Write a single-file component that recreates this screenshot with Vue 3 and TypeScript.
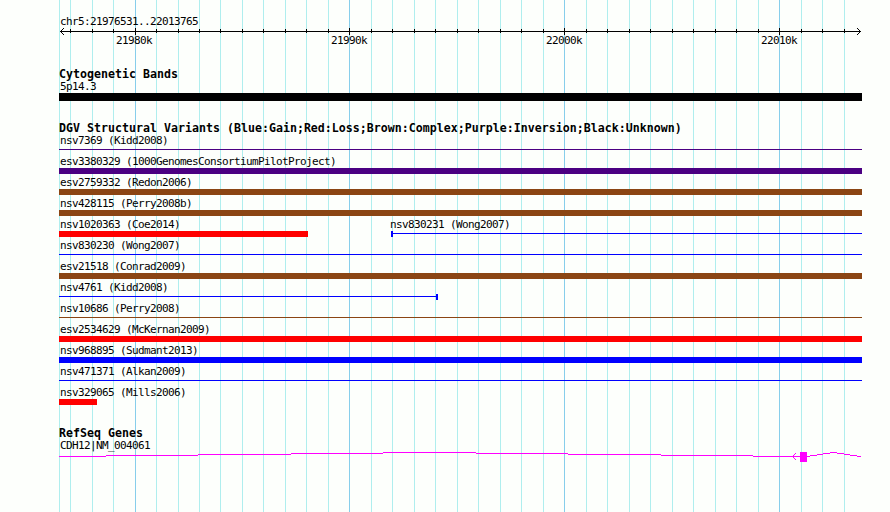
<script setup lang="ts">
interface Feature {
  label: string
  start: number
  end: number
  kind: 'bar' | 'line'
  color: 'gain' | 'loss' | 'complex' | 'inversion'
  cap?: 'left' | 'right'
}

const left = 59
const majors = [135, 349, 564, 779]
const grid = [
  59, 70, 92, 113, 135, 156, 178, 199, 220, 242, 263, 285, 306, 328, 349, 371, 392, 414, 435,
  457, 478, 500, 521, 543, 564, 586, 607, 629, 650, 672, 693, 715, 736, 758, 779, 801, 822, 844,
]
const ticks = grid.slice(1)
const isMajor = (x: number) => majors.includes(x)

const scaleLabels = ['21980k', '21990k', '22000k', '22010k']

const full = { start: 59, end: 862 }
const rows: Feature[][] = [
  [{ label: 'nsv7369 (Kidd2008)', ...full, kind: 'line', color: 'inversion' }],
  [{ label: 'esv3380329 (1000GenomesConsortiumPilotProject)', ...full, kind: 'bar', color: 'inversion' }],
  [{ label: 'esv2759332 (Redon2006)', ...full, kind: 'bar', color: 'complex' }],
  [{ label: 'nsv428115 (Perry2008b)', ...full, kind: 'bar', color: 'complex' }],
  [
    { label: 'nsv1020363 (Coe2014)', start: 59, end: 308, kind: 'bar', color: 'loss' },
    { label: 'nsv830231 (Wong2007)', start: 391, end: 862, kind: 'line', color: 'gain', cap: 'left' },
  ],
  [{ label: 'nsv830230 (Wong2007)', ...full, kind: 'line', color: 'gain' }],
  [{ label: 'esv21518 (Conrad2009)', ...full, kind: 'bar', color: 'complex' }],
  [{ label: 'nsv4761 (Kidd2008)', start: 59, end: 438, kind: 'line', color: 'gain', cap: 'right' }],
  [{ label: 'nsv10686 (Perry2008)', ...full, kind: 'line', color: 'complex' }],
  [{ label: 'esv2534629 (McKernan2009)', ...full, kind: 'bar', color: 'loss' }],
  [{ label: 'nsv968895 (Sudmant2013)', ...full, kind: 'bar', color: 'gain' }],
  [{ label: 'nsv471371 (Alkan2009)', ...full, kind: 'line', color: 'gain' }],
  [{ label: 'nsv329065 (Mills2006)', start: 59, end: 97, kind: 'bar', color: 'loss' }],
]

const place = (f: Feature, i: number, row: Feature[]) => ({
  width: `${f.end - f.start}px`,
  marginLeft: `${f.start - (i > 0 ? row[i - 1].end : left)}px`,
})

// Intron segments as [start, end, y]
const introns: [number, number, number][] = [
  [59, 106, 4], [106, 198, 3], [198, 291, 2], [291, 383, 1], [383, 476, 0], [476, 568, 1],
  [568, 661, 2], [661, 753, 3], [753, 810, 4], [810, 817, 3], [817, 823, 2], [823, 830, 1],
  [830, 837, 0], [837, 844, 1], [844, 850, 2], [850, 857, 3], [857, 861, 4],
]
</script>

<template>
  <main class="browser">
    <svg class="grid" width="890" height="512" shape-rendering="crispEdges">
      <rect v-for="x in grid" :key="x" :x="x" y="0" width="1" height="512" :class="{ major: isMajor(x) }" />
    </svg>

    <section class="scale">
      <div class="text range">chr5:21976531..22013765</div>
      <svg class="axis" width="803" height="8" viewBox="59 28 803 8" shape-rendering="crispEdges">
        <rect x="60" y="31" width="801" height="1" />
        <rect
          v-for="x in ticks"
          :key="x"
          :x="x"
          :y="isMajor(x) ? 28 : 29"
          width="1"
          :height="isMajor(x) ? 7 : 4"
        />
        <path d="M61 30h1v-1h1v-1h1v1h-1v1h-1v1h-1zM61 32h1v1h1v1h1v1h-1v-1h-1v-1h-1z" />
        <path d="M860 30h-1v-1h-1v-1h-1v1h1v1h1v1h1zM860 32h-1v1h-1v1h-1v1h1v-1h1v-1h1z" />
      </svg>
      <div class="positions">
        <span v-for="s in scaleLabels" :key="s" class="text">{{ s }}</span>
      </div>
    </section>

    <section class="track cyto">
      <h2>Cytogenetic Bands</h2>
      <div class="text">5p14.3</div>
      <div class="band"></div>
    </section>

    <section class="track variants">
      <h2>DGV Structural Variants (Blue:Gain;Red:Loss;Brown:Complex;Purple:Inversion;Black:Unknown)</h2>
      <div v-for="(row, r) in rows" :key="r" class="row">
        <div v-for="(f, i) in row" :key="f.label" class="feature" :style="place(f, i, row)">
          <div class="text" :class="{ flush: i > 0 }">{{ f.label }}</div>
          <div class="glyph" :class="[f.kind, f.color, f.cap]"></div>
        </div>
      </div>
    </section>

    <section class="track genes">
      <h2>RefSeq Genes</h2>
      <div class="text">CDH12|NM_004061</div>
      <svg class="gene" width="803" height="10" viewBox="59 0 803 10" shape-rendering="crispEdges">
        <rect v-for="s in introns" :key="s[0]" :x="s[0]" :y="s[2]" :width="s[1] - s[0]" height="1" />
        <rect x="800" y="0" width="7" height="10" />
        <path d="M793 3h1v3h-1zM794 2h1v1h-1zM795 1h1v1h-1zM794 6h1v1h-1zM795 7h1v1h-1z" />
      </svg>
    </section>
  </main>
</template>

<style>
body {
  margin: 0;
  background: #fdfffc;
}
</style>

<style scoped>
.browser {
  position: relative;
  box-sizing: border-box;
  width: 890px;
  height: 512px;
  padding: 15px 28px 0 59px;
  overflow: hidden;
  color: #000;
  font-family: 'DejaVu Sans Mono', 'Liberation Mono', monospace;
}
.grid {
  position: absolute;
  inset: 0;
  fill: #afeeee;
}
.grid .major {
  fill: #87ceeb;
}
section {
  position: relative;
}
svg {
  display: block;
}
.text {
  height: 12px;
  padding-left: 1px;
  font-size: 11px;
  line-height: 13px;
  letter-spacing: -0.622px;
  white-space: pre;
}
.text.flush {
  padding-left: 0;
  margin-left: -1px;
}
.scale {
  height: 53px;
}
.range {
  height: 13px;
}
.positions {
  display: flex;
  gap: 178px;
  padding: 0 0 0 56px;
  margin-top: -2px;
}
.positions .text {
  width: 36px;
}
h2 {
  height: 12px;
  margin: 0;
  font-size: 11.6px;
  font-weight: 700;
  line-height: 12px;
  letter-spacing: 0.0165px;
  white-space: pre;
}
.cyto {
  height: 54px;
}
.band {
  height: 8px;
  margin-top: 1px;
  background: #000;
}
.variants {
  height: 305px;
}
.row {
  display: flex;
  height: 21px;
}
.feature {
  flex: none;
}
.glyph {
  position: relative;
  box-sizing: border-box;
  height: 6px;
  margin-top: 1px;
  background: currentColor;
}
.glyph.line {
  background: linear-gradient(currentColor, currentColor) 0 2px / 100% 1px no-repeat;
}
.left {
  border-left: 2px solid;
}
.right {
  border-right: 2px solid;
}
.gain {
  color: #00f;
}
.loss {
  color: #f00;
}
.complex {
  color: #8b4513;
}
.inversion {
  color: #4b0082;
}
.gene {
  margin-top: 1px;
  fill: #f0f;
}
</style>
